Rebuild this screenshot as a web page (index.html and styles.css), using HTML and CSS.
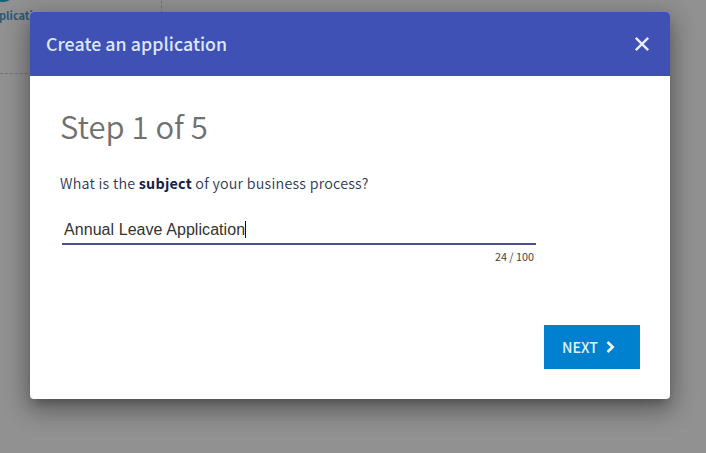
FILE: index.html
```html
<!DOCTYPE html>
<html lang="en">
<head>
<meta charset="utf-8">
<title>Create an application</title>
<link rel="stylesheet" href="styles.css">
</head>
<body>
<div class="backdrop-card">
  <svg class="card-icon" width="24" height="22" viewBox="0 0 24 22"><ellipse cx="12" cy="11" rx="12" ry="11"/></svg>
  <span class="card-label">plication</span>
</div>
<main class="dialog">
  <header class="dialog-header">
    <h1 class="dialog-title">Create an application</h1>
    <button class="close" aria-label="Close"><svg width="16" height="16" viewBox="0 0 16 16"><path d="M1.8 1.8 14.2 14.2M14.2 1.8 1.8 14.2"/></svg></button>
  </header>
  <section class="dialog-body">
    <h2 class="step">Step 1 of 5</h2>
    <p class="question">What is the <b>subject</b> of your business process?</p>
    <div class="field">
      <div class="field-input"><span class="value">Annual Leave Application</span><span class="caret"></span></div>
      <div class="counter">24 / 100</div>
    </div>
    <button class="next"><span>NEXT</span><svg width="10" height="14" viewBox="0 0 10 14"><path d="M1.5 2 6.7 7 1.5 12"/></svg></button>
  </section>
</main>
</body>
</html>
```
FILE: styles.css
```css
* { box-sizing: border-box; }
body {
  margin: 0;
  height: 453px;
  padding: 12px 36px 54px 30px;
  overflow: hidden;
  position: relative;
  background: #919191;
  font-family: "Noto Sans CJK JP", "Noto Sans", sans-serif;
}
h1, h2, p { margin: 0; font-weight: 400; }
button { border: 0; padding: 0; font-family: inherit; }
.backdrop-card {
  position: absolute;
  left: -40px;
  top: -60px;
  width: 202px;
  height: 134px;
  border: 1px dashed #747480;
}
.card-icon { position: absolute; left: 30px; top: 39px; fill: #146276; }
.card-label {
  position: absolute;
  left: 38px;
  top: 66px;
  font-size: 11px;
  font-weight: 700;
  line-height: 16px;
  color: #285a78;
}
.dialog {
  position: relative;
  height: 387px;
  border-radius: 4px;
  background: #fff;
  box-shadow: 0 7px 8px -4px rgba(0,0,0,.2), 0 10px 24px 2px rgba(0,0,0,.25), 0 5px 22px 4px rgba(0,0,0,.14);
}
.dialog-header {
  display: flex;
  align-items: center;
  justify-content: space-between;
  height: 64px;
  padding: 0 20px 2px 16px;
  border-radius: 4px 4px 0 0;
  background: #3f51b5;
}
.dialog-title { font-size: 17.8px; font-weight: 500; line-height: 28px; letter-spacing: .03px; color: #dce6ff; white-space: nowrap; }
.close { width: 16px; height: 16px; margin-top: 2px; background: none; }
.close svg { display: block; fill: none; stroke: #e7edff; stroke-width: 2.4; }
.dialog-body { display: flex; flex-direction: column; padding: 29px 30px 0; }
.step { font-size: 31px; font-weight: 350; line-height: 42px; color: #707070; white-space: nowrap; }
.question { margin-top: 24px; font-size: 14.3px; font-weight: 350; line-height: 24px; letter-spacing: .24px; color: #2c3757; white-space: nowrap; }
.question b { color: #14204a; }
.field { width: 474px; margin: 21px 0 0 2px; }
.field-input {
  display: flex;
  align-items: center;
  height: 29px;
  padding-left: 2px;
  border-bottom: 2px solid #4b5190;
  font: 16px/22px "Liberation Sans", Arial, sans-serif;
  letter-spacing: .06px;
  color: #333;
}
.caret { width: 1px; height: 17px; background: #111; }
.counter { padding: 2px 2px 0 0; font-size: 10.8px; line-height: 18px; text-align: right; color: #444; }
.next {
  display: flex;
  align-items: center;
  align-self: flex-end;
  gap: 8px;
  width: 96px;
  height: 44px;
  margin-top: 60px;
  padding-left: 18px;
  background: #0081cf;
  color: #dff3ff;
  font-size: 14.3px;
  font-weight: 500;
  line-height: 22px;
}
.next svg { fill: none; stroke: #eef9ff; stroke-width: 2.6; }
```
